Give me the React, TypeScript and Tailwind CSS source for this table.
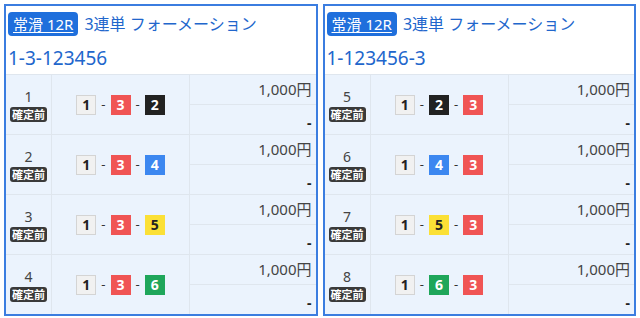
import React from "react";

type Row = { no: number; combo: number[] };

const boatColor: Record<number, string> = {
  1: "bg-[#f1f1f1] text-[#222] border border-[#d4d4d4]",
  2: "bg-[#222222] text-white",
  3: "bg-[#f05454] text-white",
  4: "bg-[#3c87f0] text-white",
  5: "bg-[#fbe036] text-[#222]",
  6: "bg-[#1fa65a] text-white",
};

function Boat({ n }: { n: number }) {
  return (
    <span
      className={`flex h-[20px] w-[20px] items-center justify-center text-[14px] font-bold leading-none ${boatColor[n]}`}
    >
      {n}
    </span>
  );
}

function TicketRow({ row }: { row: Row }) {
  return (
    <div className="flex h-[60px] border-t border-[#dfe6ee]">
      <div className="flex w-[46px] flex-col items-center justify-center gap-[3px] border-r border-[#dfe6ee] pt-[2px]">
        <span className="block text-[14px] leading-[14px] text-[#444]">{row.no}</span>
        <span className="block rounded-[3px] bg-[#3a3a3a] px-[2px] text-[11px] font-bold leading-[15px] text-white">
          確定前
        </span>
      </div>
      <div className="flex w-[138px] items-center justify-center gap-[5px] border-r border-[#dfe6ee] text-[13px] text-[#333]">
        <Boat n={row.combo[0]} />
        <span>-</span>
        <Boat n={row.combo[1]} />
        <span>-</span>
        <Boat n={row.combo[2]} />
      </div>
      <div className="flex flex-1 flex-col">
        <div className="flex h-[30px] items-center justify-end border-b border-[#dfe6ee] pr-[4px] text-[15px] text-[#444]">
          1,000円
        </div>
        <div className="flex flex-1 items-center justify-end pr-[4px] pt-[6px] text-[14px] font-bold text-[#222]">
          -
        </div>
      </div>
    </div>
  );
}

function Card({ title, rows }: { title: string; rows: Row[] }) {
  return (
    <div className="flex flex-1 flex-col border-2 border-[#3b7de0] bg-white">
      <div className="flex h-[68px] flex-col px-[2px] pt-[6px]">
        <div className="flex items-center gap-[6px]">
          <span className="rounded-[4px] bg-[#1f6fdc] px-[5px] text-[15px] leading-[24px] text-white underline underline-offset-2">
            常滑 12R
          </span>
          <span className="text-[16px] text-[#2166cc]">3連単 フォーメーション</span>
        </div>
        <div className="mt-[10px] text-[19px] leading-[24px] text-[#2166cc]">{title}</div>
      </div>
      <div className="flex flex-col bg-[#ebf3fd]">
        {rows.map((r) => (
          <TicketRow key={r.no} row={r} />
        ))}
      </div>
    </div>
  );
}

export default function App() {
  const left: Row[] = [
    { no: 1, combo: [1, 3, 2] },
    { no: 2, combo: [1, 3, 4] },
    { no: 3, combo: [1, 3, 5] },
    { no: 4, combo: [1, 3, 6] },
  ];
  const right: Row[] = [
    { no: 5, combo: [1, 2, 3] },
    { no: 6, combo: [1, 4, 3] },
    { no: 7, combo: [1, 5, 3] },
    { no: 8, combo: [1, 6, 3] },
  ];
  return (
    <div
      className="flex h-[318px] w-[640px] items-start gap-[5px] bg-white px-[4px] pt-[4px]"
      style={{ fontFamily: '"Noto Sans", "Noto Sans CJK JP", sans-serif' }}
    >
      <Card title="1-3-123456" rows={left} />
      <Card title="1-123456-3" rows={right} />
    </div>
  );
}
